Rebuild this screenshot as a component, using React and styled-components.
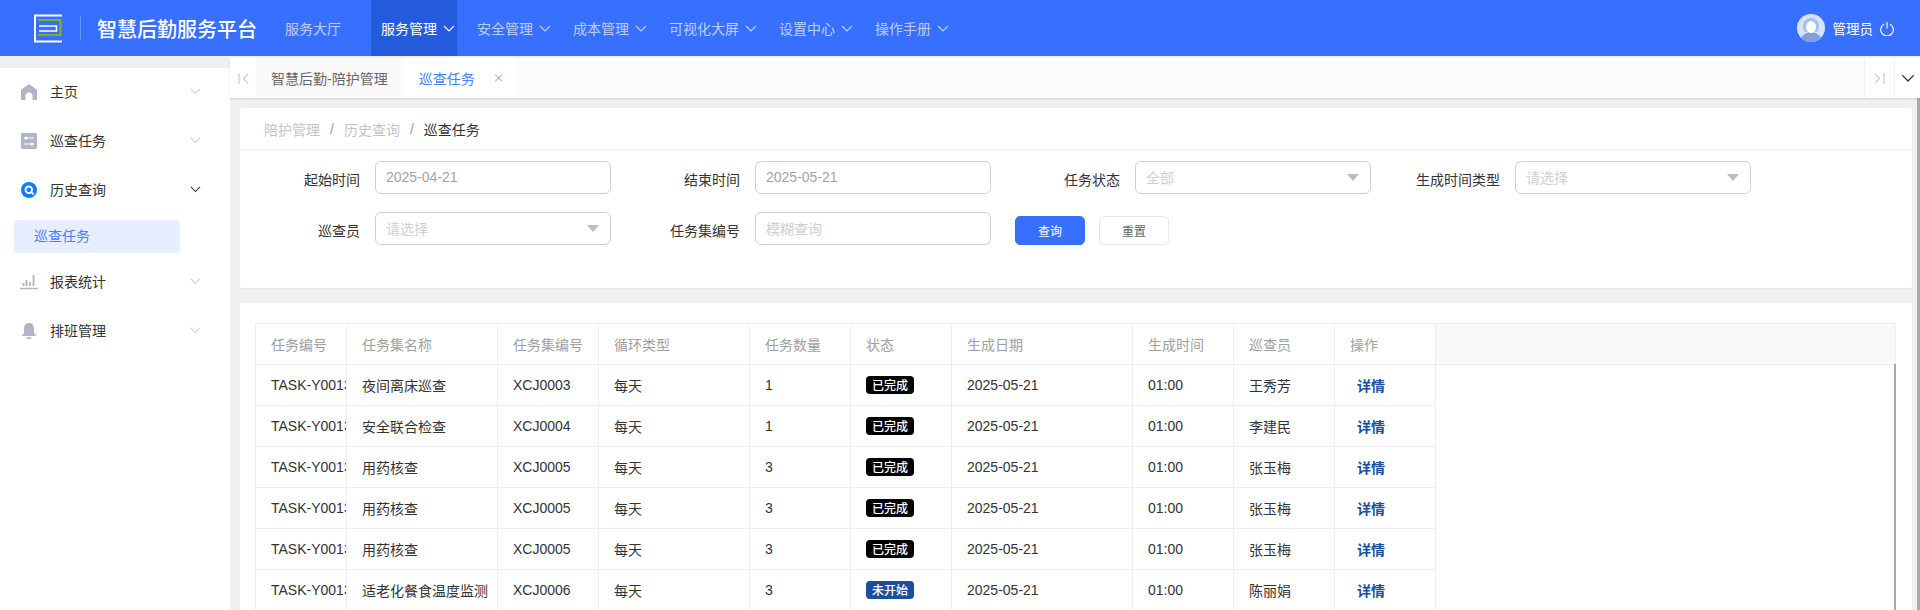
import React from "react";
import styled, { createGlobalStyle } from "styled-components";

const GlobalStyle = createGlobalStyle`
  html, body {
    margin: 0;
    height: 610px;
    overflow: hidden;
    background: #f0f0f0;
    font-family: "Liberation Sans", "Noto Sans CJK SC", sans-serif;
    font-size: 14px;
    color: #333;
  }
`;

const Page = styled.div`
  width: 1920px;
  height: 610px;
  display: flex;
  flex-direction: column;
  overflow: hidden;
`;

/* top bar */
const Header = styled.header`
  height: 56px;
  flex: none;
  background: #376fff;
  display: flex;
  align-items: center;
  color: #fff;
`;
const LogoBox = styled.div`
  width: 81px;
  height: 24px;
  padding-left: 33px;
  box-sizing: border-box;
  border-right: 1px solid rgba(255, 255, 255, 0.25);
  display: flex;
  align-items: center;
`;
const Title = styled.div`
  margin-left: 16px;
  width: 178px;
  font-size: 20px;
  font-weight: 500;
  white-space: nowrap;
`;
const NavList = styled.nav`
  display: flex;
  height: 100%;
  gap: 10px;
`;
const NavItem = styled.div`
  display: flex;
  align-items: center;
  gap: 6px;
  padding: 0 2px 0 10px;
  height: 100%;
  min-width: ${(p) => (p.$plain ? "86px" : "auto")};
  box-sizing: border-box;
  background: ${(p) => (p.$active ? "#245bdd" : "transparent")};
  color: ${(p) => (p.$active ? "#fff" : "rgba(255,255,255,0.68)")};
  white-space: nowrap;
`;
const UserBox = styled.div`
  margin-left: auto;
  padding-right: 26px;
  display: flex;
  align-items: center;
  font-size: 13.5px;
`;
const UserName = styled.span`
  margin: 0 7px 0 8px;
`;

/* below the bar */
const Body = styled.div`
  flex: 1;
  display: flex;
  min-height: 0;
`;
const Sidebar = styled.aside`
  width: 230px;
  flex: none;
  margin-top: 12px;
  background: #fff;
`;
const MenuItem = styled.div`
  height: 49px;
  display: flex;
  align-items: center;
  box-sizing: border-box;
  padding: 0 29px 2px 21px;
  color: #333;
`;
const MenuIcon = styled.span`
  width: 16px;
  height: 16px;
  flex: none;
  display: flex;
  justify-content: center;
`;
const MenuLabel = styled.span`
  margin: 0 0 2px 13px;
  flex: 1;
`;
const SubItem = styled.div`
  width: 166px;
  height: 33px;
  margin: 5px 0 5px 14px;
  padding: 0 0 4px 20px;
  box-sizing: border-box;
  border-radius: 4px;
  background: #e6eeff;
  color: #4a80ff;
  display: flex;
  align-items: center;
`;
const Main = styled.main`
  flex: 1;
  min-width: 0;
  margin-top: 2px;
  display: flex;
  flex-direction: column;
`;

/* tabs */
const TabBar = styled.div`
  height: 40px;
  flex: none;
  display: flex;
  background: #fcfcfc;
  box-shadow: 0 1px 2px rgba(0, 0, 0, 0.12);
  position: relative;
`;
const TabArrow = styled.div`
  width: ${(p) => p.$w || 26}px;
  flex: none;
  display: flex;
  align-items: center;
  justify-content: center;
  background: #fff;
  border-left: ${(p) => (p.$edge ? "1px solid #f0f0f0" : "none")};
  box-sizing: border-box;
  margin-left: ${(p) => (p.$push ? "auto" : 0)};
`;
const Tab = styled.div`
  height: 100%;
  display: flex;
  align-items: center;
  box-sizing: border-box;
  padding: ${(p) => (p.$active ? "0 13px 0 16px" : "0 15px")};
  background: ${(p) => (p.$active ? "#fff" : "#fafafa")};
  color: ${(p) => (p.$active ? "#4a80ff" : "#666")};
  white-space: nowrap;
`;
const TabClose = styled.span`
  margin-left: 19px;
  font-size: 0;
  display: flex;
`;

/* content */
const ContentRow = styled.div`
  flex: 1;
  min-height: 0;
  display: flex;
`;
const Scroller = styled.div`
  flex: 1;
  min-width: 0;
  padding: 10px 5px 0 10px;
`;
const ScrollThumb = styled.div`
  width: 3px;
  flex: none;
  background: #a9a9a9;
`;
const FilterCard = styled.section`
  height: 180px;
  background: #fff;
  border-radius: 2px;
  box-shadow: 0 1px 2px rgba(0, 0, 0, 0.06);
`;
const Breadcrumb = styled.div`
  height: 42px;
  box-sizing: border-box;
  border-bottom: 1px solid #f0f0f0;
  padding-left: 24px;
  display: flex;
  align-items: center;
  color: #c4c4c4;
`;
const CrumbSep = styled.span`
  margin: 0 10px;
  color: #999;
`;
const CrumbCurrent = styled.span`
  color: #333;
`;
const FilterGrid = styled.div`
  display: grid;
  grid-template-columns: repeat(4, 380px);
  row-gap: 18px;
  padding-top: 11px;
`;
const Field = styled.div`
  display: flex;
  align-items: center;
`;
const FieldLabel = styled.label`
  width: 120px;
  margin-right: 15px;
  padding-top: 2px;
  text-align: right;
  color: #333;
`;
const InputBox = styled.div`
  width: 236px;
  height: 33px;
  box-sizing: border-box;
  border: 1px solid #d0d0d0;
  border-radius: 6px;
  padding: 0 11px 2px 10px;
  display: flex;
  align-items: center;
  justify-content: space-between;
  color: ${(p) => (p.$value ? "#a3a3a3" : "#cfcfcf")};
`;
const Caret = styled.i`
  width: 0;
  height: 0;
  margin-top: 2px;
  border-left: 6px solid transparent;
  border-right: 6px solid transparent;
  border-top: 7px solid #bdbdbd;
`;
const Buttons = styled.div`
  display: flex;
  align-items: flex-end;
  align-self: stretch;
  gap: 14px;
  padding-left: 15px;
`;
const Button = styled.button`
  width: 70px;
  height: 29px;
  padding: 0;
  font-family: inherit;
  font-size: 12px;
  border-radius: 5px;
  border: 1px solid ${(p) => (p.$primary ? "#376fff" : "#e8e8e8")};
  background: ${(p) => (p.$primary ? "#376fff" : "#fff")};
  color: ${(p) => (p.$primary ? "#fff" : "#666")};
`;

/* table */
const TableCard = styled.section`
  margin-top: 15px;
  height: 320px;
  padding: 20px 16px 0 15px;
  background: #fff;
  overflow: hidden;
`;
const Table = styled.table`
  width: 1641px;
  table-layout: fixed;
  border-collapse: collapse;
`;
const Th = styled.th`
  height: 40px;
  padding: 0 0 0 15px;
  border: 1px solid #eee;
  text-align: left;
  font-weight: 400;
  color: #a0a0a0;
  background: ${(p) => (p.$filler ? "#f9f9f9" : "#fff")};
`;
const Td = styled.td`
  height: 39px;
  padding: 0 0 1px ${(p) => p.$pad || 15}px;
  border: 1px solid #eee;
  white-space: nowrap;
  overflow: hidden;
  color: #333;
`;
const FillerTd = styled.td`
  border-right: 2px solid #a9a9a9;
`;
const Badge = styled.span`
  display: inline-flex;
  align-items: center;
  justify-content: center;
  width: 48px;
  height: 18px;
  border-radius: 4px;
  font-size: 12px;
  font-weight: 500;
  color: #fff;
  vertical-align: middle;
  background: ${(p) => (p.$todo ? "#1a4f9c" : "#000")};
`;
const DetailLink = styled.span`
  font-weight: 700;
  color: #1a4f9c;
`;

const Chevron = ({ color = "#fff", w = 12 }) => (
  <svg width={w} height={(w * 7) / 12} viewBox="0 0 12 7" fill="none">
    <path d="M1 1l5 5 5-5" stroke={color} strokeWidth="1.1" />
  </svg>
);

const Logo = () => (
  <svg width="30" height="30" viewBox="0 0 30 30" fill="none">
    <path d="M29 2.500H2v26h27" stroke="#fff" strokeWidth="2" />
    <path d="M5 7h22.500v15H5" stroke="#7cb518" strokeWidth="2.200" />
    <path d="M6 13h17.500v5H6" stroke="#fff" strokeWidth="1.500" />
  </svg>
);

const Avatar = () => (
  <svg width="28" height="28" viewBox="0 0 28 28">
    <circle cx="14" cy="14" r="14" fill="#d7e3f9" />
    <path d="M6 12c0-5 3.500-8 8-8s8 3 8 8c0 3-1 5-2 6H8c-1-1-2-3-2-6z" fill="#a9c0ee" />
    <path d="M4 24c1.500-3.500 5-5 7.500-5.500h5c2.500.5 6 2 7.500 5.500a14 14 0 0 1-20 0z" fill="#7fa0e0" />
    <ellipse cx="14" cy="13" rx="5" ry="6" fill="#fff" />
  </svg>
);

const PowerIcon = () => (
  <svg width="14" height="15" viewBox="0 0 14 15" fill="none" stroke="#fff" strokeWidth="1.100">
    <path d="M4.200 3A6.300 6.300 0 1 0 9.800 3" />
    <path d="M7 1v6.500" />
  </svg>
);

const HomeIcon = () => (
  <svg width="16" height="16" viewBox="0 0 16 16">
    <path
      d="M8 0l7.300 5.300c.4.300.7.800.7 1.300V15a1 1 0 0 1-1 1h-3.500v-4a3.500 3.500 0 0 0-7 0v4H1a1 1 0 0 1-1-1V6.600c0-.5.300-1 .7-1.300z"
      fill="#b1b5c6"
    />
  </svg>
);

const TaskIcon = () => (
  <svg width="16" height="16" viewBox="0 0 16 16">
    <rect width="16" height="16" rx="1.500" fill="#b1b5c6" />
    <path d="M3 5h10M3 11h10" stroke="#fff" strokeWidth="1.200" />
    <circle cx="5" cy="5" r="1.500" fill="#fff" />
    <circle cx="11" cy="11" r="1.500" fill="#fff" />
  </svg>
);

const SearchIcon = () => (
  <svg width="16" height="16" viewBox="0 0 16 16">
    <circle cx="8" cy="8" r="8" fill="#0f7cff" />
    <circle cx="7.800" cy="7.800" r="3.300" fill="none" stroke="#fff" strokeWidth="1.800" />
    <path d="M10.300 10.300l2.500 2.200" stroke="#fff" strokeWidth="1.800" />
  </svg>
);

const ChartIcon = () => (
  <svg width="18" height="16" viewBox="0 0 18 16" style={{ flex: "none" }}>
    <path d="M0 14.500h18" stroke="#b1b5c6" strokeWidth="1.500" />
    <path d="M3.500 12V9M6.500 12V6M10 12V8M13.500 12V1" stroke="#b1b5c6" strokeWidth="1.800" />
  </svg>
);

const BellIcon = () => (
  <svg width="16" height="16" viewBox="0 0 16 16">
    <path
      d="M8 0c3 0 5 2.200 5 5.500V10l2 2.500v.500H1v-.500L3 10V5.500C3 2.200 5 0 8 0z"
      fill="#b1b5c6"
    />
    <rect x="5.500" y="14.200" width="5" height="1.800" rx=".8" fill="#b1b5c6" />
  </svg>
);

const SkipIcon = ({ right }) => (
  <svg width="11" height="11" viewBox="0 0 11 11" fill="none" stroke="#cfcfcf" strokeWidth="1.300">
    {right ? <path d="M1 1l4.500 4.500L1 10M10 0v11" /> : <path d="M10 1L5.500 5.500 10 10M1 0v11" />}
  </svg>
);

const CloseIcon = () => (
  <svg width="9" height="8" viewBox="0 0 9 8" fill="none" stroke="#6f98ff" strokeWidth="1">
    <path d="M1 .5l7 7M8 .5l-7 7" />
  </svg>
);

const navItems = ["服务管理", "安全管理", "成本管理", "可视化大屏", "设置中心", "操作手册"];

const menuBefore = [
  { label: "主页", icon: <HomeIcon /> },
  { label: "巡查任务", icon: <TaskIcon /> },
  { label: "历史查询", icon: <SearchIcon />, open: true },
];
const menuAfter = [
  { label: "报表统计", icon: <ChartIcon /> },
  { label: "排班管理", icon: <BellIcon /> },
];

const columns = ["任务编号", "任务集名称", "任务集编号", "循环类型", "任务数量", "状态", "生成日期", "生成时间", "巡查员", "操作"];
const colWidths = [91, 151, 101, 151, 101, 101, 181, 101, 101, 101];

const rows = [
  { name: "夜间离床巡查", set: "XCJ0003", count: 1, person: "王秀芳" },
  { name: "安全联合检查", set: "XCJ0004", count: 1, person: "李建民" },
  { name: "用药核查", set: "XCJ0005", count: 3, person: "张玉梅" },
  { name: "用药核查", set: "XCJ0005", count: 3, person: "张玉梅" },
  { name: "用药核查", set: "XCJ0005", count: 3, person: "张玉梅" },
  { name: "适老化餐食温度监测", set: "XCJ0006", count: 3, person: "陈丽娟", todo: true },
];

const Menu = ({ item }) => (
  <MenuItem>
    <MenuIcon>{item.icon}</MenuIcon>
    <MenuLabel>{item.label}</MenuLabel>
    <Chevron w={11} color={item.open ? "#333" : "#ccc"} />
  </MenuItem>
);

const App = () => {
  return (
    <Page>
      <GlobalStyle />
      <Header>
        <LogoBox>
          <Logo />
        </LogoBox>
        <Title>智慧后勤服务平台</Title>
        <NavList>
          <NavItem $plain>服务大厅</NavItem>
          {navItems.map((name, i) => (
            <NavItem key={name} $active={i === 0}>
              {name}
              <Chevron color={i === 0 ? "#fff" : "rgba(255,255,255,0.68)"} />
            </NavItem>
          ))}
        </NavList>
        <UserBox>
          <Avatar />
          <UserName>管理员</UserName>
          <PowerIcon />
        </UserBox>
      </Header>
      <Body>
        <Sidebar>
          {menuBefore.map((item) => (
            <Menu key={item.label} item={item} />
          ))}
          <SubItem>巡查任务</SubItem>
          {menuAfter.map((item) => (
            <Menu key={item.label} item={item} />
          ))}
        </Sidebar>
        <Main>
          <TabBar>
            <TabArrow>
              <SkipIcon />
            </TabArrow>
            <Tab>智慧后勤-陪护管理</Tab>
            <Tab $active>
              巡查任务
              <TabClose>
                <CloseIcon />
              </TabClose>
            </Tab>
            <TabArrow $push $edge $w={30}>
              <SkipIcon right />
            </TabArrow>
            <TabArrow $edge>
              <Chevron color="#333" w={14} />
            </TabArrow>
          </TabBar>
          <ContentRow>
            <Scroller>
              <FilterCard>
                <Breadcrumb>
                  陪护管理
                  <CrumbSep>/</CrumbSep>
                  历史查询
                  <CrumbSep>/</CrumbSep>
                  <CrumbCurrent>巡查任务</CrumbCurrent>
                </Breadcrumb>
                <FilterGrid>
                  <Field>
                    <FieldLabel>起始时间</FieldLabel>
                    <InputBox $value>2025-04-21</InputBox>
                  </Field>
                  <Field>
                    <FieldLabel>结束时间</FieldLabel>
                    <InputBox $value>2025-05-21</InputBox>
                  </Field>
                  <Field>
                    <FieldLabel>任务状态</FieldLabel>
                    <InputBox>
                      全部
                      <Caret />
                    </InputBox>
                  </Field>
                  <Field>
                    <FieldLabel>生成时间类型</FieldLabel>
                    <InputBox>
                      请选择
                      <Caret />
                    </InputBox>
                  </Field>
                  <Field>
                    <FieldLabel>巡查员</FieldLabel>
                    <InputBox>
                      请选择
                      <Caret />
                    </InputBox>
                  </Field>
                  <Field>
                    <FieldLabel>任务集编号</FieldLabel>
                    <InputBox>模糊查询</InputBox>
                  </Field>
                  <Buttons>
                    <Button $primary>查询</Button>
                    <Button>重置</Button>
                  </Buttons>
                </FilterGrid>
              </FilterCard>
              <TableCard>
                <Table>
                  <colgroup>
                    {colWidths.map((w, i) => (
                      <col key={i} width={w} />
                    ))}
                    <col />
                  </colgroup>
                  <thead>
                    <tr>
                      {columns.map((c) => (
                        <Th key={c}>{c}</Th>
                      ))}
                      <Th $filler />
                    </tr>
                  </thead>
                  <tbody>
                    {rows.map((r, i) => (
                      <tr key={i}>
                        <Td>TASK-Y00133456</Td>
                        <Td>{r.name}</Td>
                        <Td>{r.set}</Td>
                        <Td>每天</Td>
                        <Td>{r.count}</Td>
                        <Td>
                          <Badge $todo={r.todo}>{r.todo ? "未开始" : "已完成"}</Badge>
                        </Td>
                        <Td>2025-05-21</Td>
                        <Td>01:00</Td>
                        <Td>{r.person}</Td>
                        <Td $pad={22}>
                          <DetailLink>详情</DetailLink>
                        </Td>
                        <FillerTd />
                      </tr>
                    ))}
                  </tbody>
                </Table>
              </TableCard>
            </Scroller>
            <ScrollThumb />
          </ContentRow>
        </Main>
      </Body>
    </Page>
  );
};

export default App;
